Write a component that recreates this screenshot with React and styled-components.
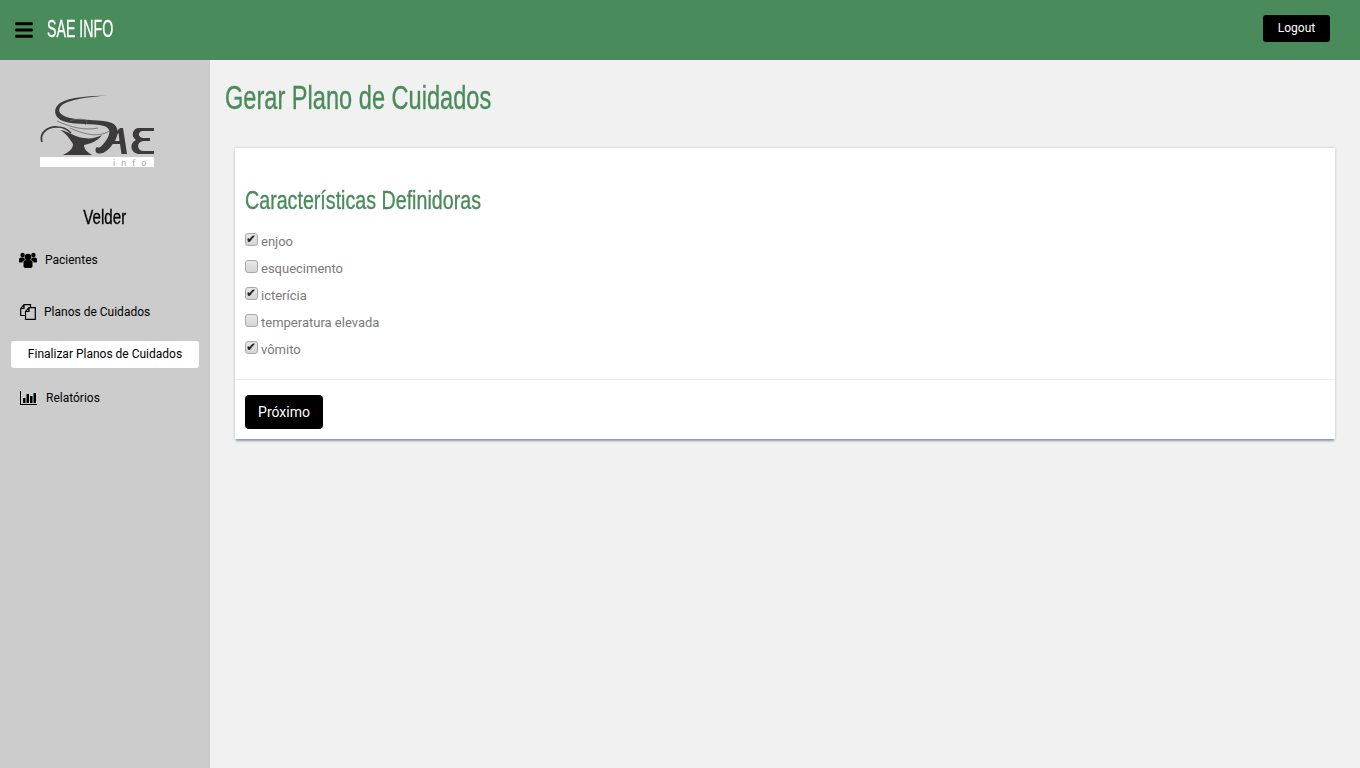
import React from 'react';
import styled, { createGlobalStyle } from 'styled-components';
import { FaBars } from 'react-icons/fa';

const Global = createGlobalStyle`
  html, body { margin: 0; padding: 0; height: 100%; }
  body { background: #f1f1f1; font-family: Roboto, "Liberation Sans", sans-serif; }
`;

const Page = styled.div`
  width: 1360px;
  height: 768px;
  overflow: hidden;
  display: flex;
  flex-direction: column;
`;

const Topbar = styled.header`
  height: 60px;
  flex: none;
  box-sizing: border-box;
  background: #498b5a;
  display: flex;
  align-items: center;
  padding: 0 30px 1px 14px;
`;

// no condensed family is installed, so the heading face is narrowed by hand
const Narrow = styled.span`
  display: inline-block;
  white-space: nowrap;
  font-family: "Liberation Sans", sans-serif;
  -webkit-text-stroke: .35px currentColor;
  transform: scaleX(${p => p.$sx});
  transform-origin: ${p => p.$origin || 'left'} center;
`;

const Brand = styled.div`
  margin-left: 13px;
  color: #fff;
  font-size: 23px;
  line-height: 28px;
`;

const LogoutButton = styled.button`
  margin: 0 0 2px auto;
  width: 67px;
  height: 27px;
  padding: 0 0 2px;
  background: #000;
  color: #fff;
  border: 0;
  border-radius: 3px;
  font: 12px Roboto, sans-serif;
`;

const Body = styled.div`
  flex: 1;
  display: flex;
`;

const Sidebar = styled.aside`
  width: 210px;
  flex: none;
  background: #ccc;
  padding-top: 35px;
  box-sizing: border-box;
`;

const LogoWrap = styled.div`
  width: 115px;
  height: 73px;
  margin-left: 40px;
`;

const UserName = styled.div`
  margin-top: 37px;
  text-align: center;
  color: #000;
  font-size: 21px;
  line-height: 24px;
`;

const NavItem = styled.div`
  display: flex;
  align-items: center;
  height: 20px;
  margin-top: ${p => p.$top}px;
  padding-left: 19px;
  gap: ${p => p.$gap}px;
  font-size: 12px;
  color: #000;
`;

const NavIcon = styled.svg`
  flex: none;
  margin-left: ${p => p.$left || 0}px;
`;

const SubItem = styled.div`
  margin: 19px 11px 0;
  height: 27px;
  line-height: 27px;
  background: #fff;
  border-radius: 3px;
  text-align: center;
  font-size: 12px;
  color: #000;
`;

const Main = styled.main`
  flex: 1;
  padding: 0 25px 0 15px;
`;

const Title = styled.h1`
  margin: 16px 0 28px;
  color: #498b5a;
  font-size: 33px;
  font-weight: 400;
  line-height: 44px;
`;

const Card = styled.section`
  margin-left: 10px;
  background: #fff;
  box-shadow: 0 3px 2px -1px rgba(60, 85, 110, .5), 0 0 3px rgba(60, 85, 110, .25);
`;

const CardBody = styled.div`
  padding: 36px 10px 16px;
  border-bottom: 1px solid #eee;
`;

const Subtitle = styled.h2`
  margin: 0 0 12px;
  color: #498b5a;
  font-size: 26px;
  font-weight: 400;
  line-height: 32px;
`;

const CheckRow = styled.label`
  display: flex;
  align-items: center;
  height: 27px;
  color: #7a7a7a;
  font-size: 13px;
`;

const Check = styled.input`
  appearance: none;
  position: relative;
  box-sizing: border-box;
  width: 13px;
  height: 13px;
  margin: 0 3px 4px 0;
  background: linear-gradient(#e8e8e8, #d4d4d4);
  border: 1px solid #a8a8a8;
  border-radius: 3px;

  &:checked::after {
    content: '✔';
    position: absolute;
    left: 0;
    top: -1px;
    color: #222;
    font: 12px/12px "DejaVu Sans", sans-serif;
  }
`;

const CardFooter = styled.div`
  padding: 15px 10px 10px;
`;

const NextButton = styled.button`
  display: block;
  width: 78px;
  height: 34px;
  padding: 0;
  background: #000;
  color: #fff;
  border: 0;
  border-radius: 4px;
  font: 14px Roboto, sans-serif;
`;

const Logo = () => (
  <svg width="115" height="73" viewBox="0 0 115 73" style={{ filter: 'blur(.3px)' }}>
    <path d="M67 .5C50 2 30 4 22 10C16 15 20 21 30 23C45 26 62 24 72 28C80 32 79 42 72 50C68 56 62 60 57 58C55 57 55 53 57 52C60 54 63 50 67 44C71 37 70 33 64 31C52 28 38 30 26 27C14 24 12 14 20 8C30 2 50 1 67 .5Z" fill="#3c3a3b" />
    <path d="M17 26C30 32 45 36 58 33M30 26C40 22 52 25 45 30M30 33C50 42 60 41 70 36" fill="none" stroke="#666" strokeWidth=".8" />
    <path d="M2 47C-1 38 8 31 18 32C24 32 28 35 31 38" fill="none" stroke="#3c3a3b" strokeWidth="1.7" />
    <path d="M20 35C28 36 34 42 44 43C50 44 56 43 62 40C58 46 50 49 44 50C44 54 47 57 52 60H23C29 57 33 54 33 49C30 44 26 38 20 35Z" fill="#3c3a3b" />
    <path d="M80 33H83L87 59H81.5L80 49H67L69 46H79.5L78.5 38L74 43L73 40Z" fill="#3c3a3b" />
    <path d="M114 33H99C93 33 90 41 96 45C89 48 90 59 100 59H114V56H103C97 56 96 47 103 46H110V43H103C97 42 98 36 103 36H114Z" fill="#3c3a3b" />
    <rect x="0" y="62" width="114" height="10" fill="#fff" />
    <text x="73" y="71" fontFamily="Roboto, sans-serif" fontSize="9" letterSpacing="6" fill="#aaa">info</text>
  </svg>
);

const UsersIcon = () => (
  <NavIcon width="18" height="16" viewBox="0 0 18 16">
    <circle cx="9" cy="5" r="3.3" />
    <circle cx="3.6" cy="3" r="2.2" />
    <circle cx="14.4" cy="3" r="2.2" />
    <path d="M4.5 10C4.5 8.5 6 8 9 8S13.5 8.5 13.5 10V14C13.5 15.5 12.5 16 11 16H7C5.5 16 4.5 15.5 4.5 14Z" />
    <path d="M0 7.5C0 6 1 5.5 3.5 5.5C4.5 5.5 5 5.7 5.3 6C5.5 7 5.8 7.5 6.2 7.9C4.6 8.3 3.8 9 3.5 10.5H1C.3 10.5 0 10 0 9.5Z" />
    <path d="M18 7.5C18 6 17 5.5 14.5 5.5C13.5 5.5 13 5.7 12.7 6C12.5 7 12.2 7.5 11.8 7.9C13.4 8.3 14.2 9 14.5 10.5H17C17.7 10.5 18 10 18 9.5Z" />
  </NavIcon>
);

const FilesIcon = () => (
  <NavIcon $left={1} width="16" height="16" viewBox="0 0 16 16" fill="none" stroke="#000" strokeWidth="1.2">
    <path d="M10.5 3.7V.7H4L.7 4.5V11.5H5.5M4 .7V4.5H.7" />
    <path d="M9 3.7H15.3V15.3H5.5V7.5ZM9 3.7V7.5H5.5" />
  </NavIcon>
);

const ChartIcon = () => (
  <NavIcon $left={1} width="17" height="14" viewBox="0 0 17 14">
    <path d="M0 0H1V13H17V14H0Z" />
    <rect x="3" y="7" width="2.5" height="5" />
    <rect x="6.5" y="3" width="2.5" height="9" />
    <rect x="10" y="5" width="2.5" height="7" />
    <rect x="13.5" y="2" width="2.5" height="10" />
  </NavIcon>
);

const options = [
  { label: 'enjoo', checked: true },
  { label: 'esquecimento', checked: false },
  { label: 'icterícia', checked: true },
  { label: 'temperatura elevada', checked: false },
  { label: 'vômito', checked: true },
];

export default function App() {
  return (
    <Page>
      <Global />
      <Topbar>
        <FaBars size={20} color="#000" />
        <Brand><Narrow $sx={0.617}>SAE INFO</Narrow></Brand>
        <LogoutButton>Logout</LogoutButton>
      </Topbar>
      <Body>
        <Sidebar>
          <LogoWrap><Logo /></LogoWrap>
          <UserName><Narrow $sx={0.72} $origin="center">Velder</Narrow></UserName>
          <NavItem $top={21} $gap={8}><UsersIcon />Pacientes</NavItem>
          <NavItem $top={32} $gap={8}><FilesIcon />Planos de Cuidados</NavItem>
          <SubItem>Finalizar Planos de Cuidados</SubItem>
          <NavItem $top={20} $gap={9}><ChartIcon />Relatórios</NavItem>
        </Sidebar>
        <Main>
          <Title><Narrow $sx={0.715}>Gerar Plano de Cuidados</Narrow></Title>
          <Card>
            <CardBody>
              <Subtitle><Narrow $sx={0.756}>Características Definidoras</Narrow></Subtitle>
              {options.map(o => (
                <CheckRow key={o.label}>
                  <Check type="checkbox" defaultChecked={o.checked} />
                  {o.label}
                </CheckRow>
              ))}
            </CardBody>
            <CardFooter>
              <NextButton>Próximo</NextButton>
            </CardFooter>
          </Card>
        </Main>
      </Body>
    </Page>
  );
}
